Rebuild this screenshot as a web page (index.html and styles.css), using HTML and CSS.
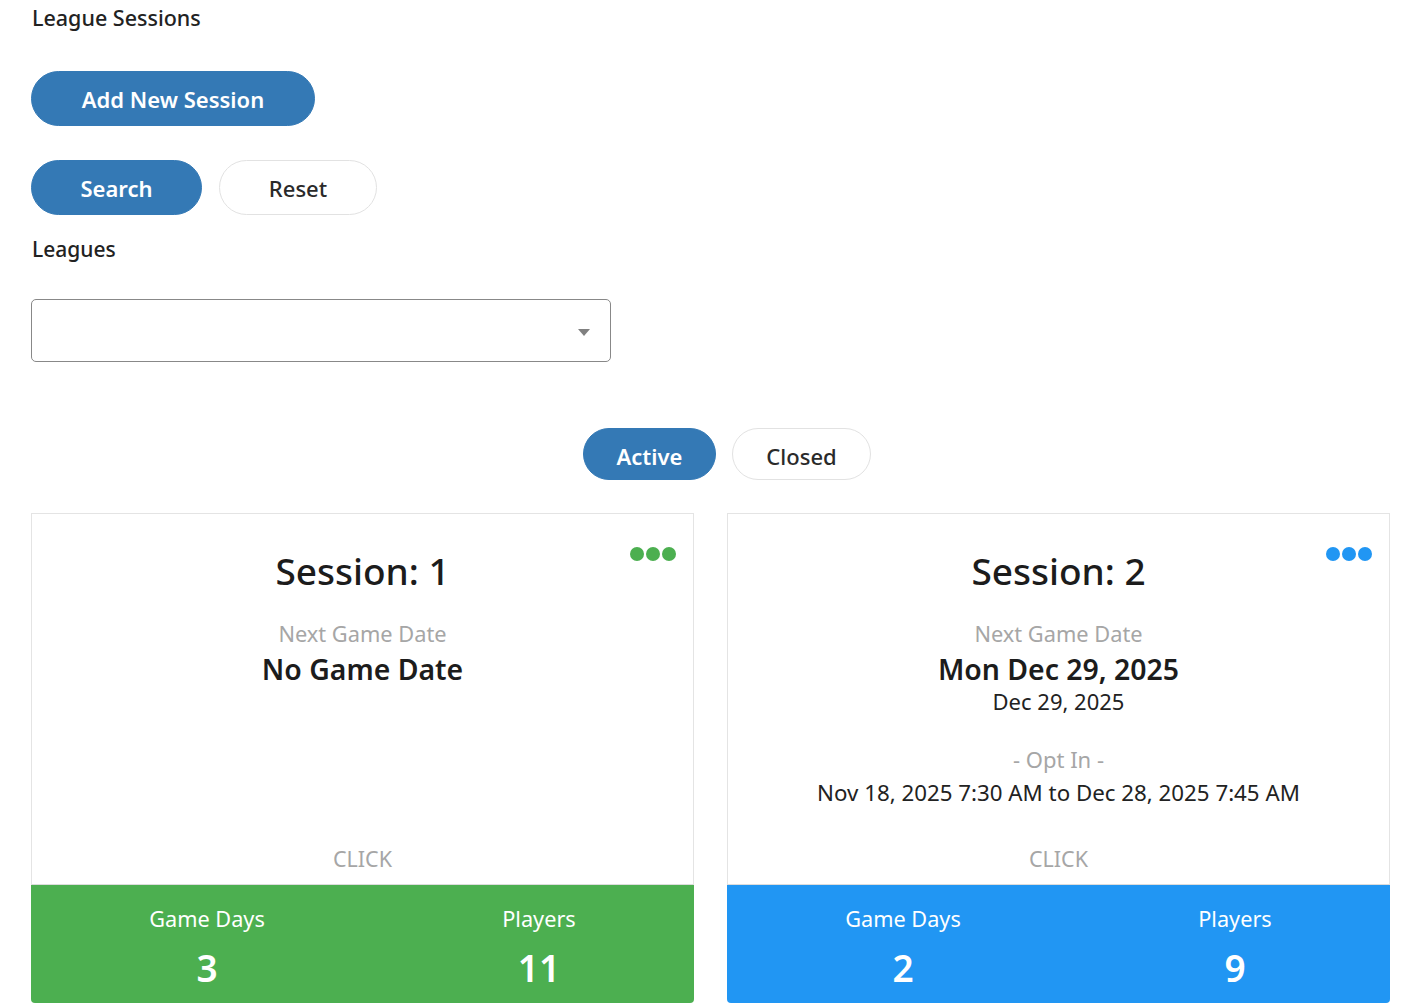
FILE: index.html
```html
<!DOCTYPE html>
<html lang="en">
<head>
<meta charset="utf-8">
<title>League Sessions</title>
<link rel="stylesheet" href="styles.css">
</head>
<body>
<div class="page">
  <h1 class="title">League Sessions</h1>
  <button class="btn btn-primary btn-add">Add New Session</button>
  <div class="search-row">
    <button class="btn btn-primary btn-search">Search</button>
    <button class="btn btn-default btn-reset">Reset</button>
  </div>
  <label class="field-label">Leagues</label>
  <div class="select">
    <span class="select-arrow"></span>
  </div>
  <div class="tabs">
    <button class="btn btn-primary tab-active">Active</button>
    <button class="btn btn-default tab-closed">Closed</button>
  </div>
  <div class="cards">
    <div class="card card-green">
      <div class="card-body">
        <div class="dots"><span></span><span></span><span></span></div>
        <div class="session-title">Session: 1</div>
        <div class="muted next-label">Next Game Date</div>
        <div class="big-date">No Game Date</div>
        <div class="muted click">CLICK</div>
      </div>
      <div class="card-footer">
        <div class="stat"><div class="stat-label">Game Days</div><div class="stat-value">3</div></div>
        <div class="stat"><div class="stat-label">Players</div><div class="stat-value">11</div></div>
      </div>
    </div>
    <div class="card card-blue">
      <div class="card-body">
        <div class="dots"><span></span><span></span><span></span></div>
        <div class="session-title">Session: 2</div>
        <div class="muted next-label">Next Game Date</div>
        <div class="big-date">Mon Dec 29, 2025</div>
        <div class="small-date">Dec 29, 2025</div>
        <div class="muted opt-label">- Opt In -</div>
        <div class="opt-range">Nov 18, 2025 7:30 AM to Dec 28, 2025 7:45 AM</div>
        <div class="muted click">CLICK</div>
      </div>
      <div class="card-footer">
        <div class="stat"><div class="stat-label">Game Days</div><div class="stat-value">2</div></div>
        <div class="stat"><div class="stat-label">Players</div><div class="stat-value">9</div></div>
      </div>
    </div>
  </div>
</div>
</body>
</html>
```

FILE: styles.css
```css
* { box-sizing: border-box; }
html, body { margin: 0; padding: 0; background: #fff; }
body {
  font-family: "Noto Sans", "Open Sans", "Liberation Sans", sans-serif;
  color: #222;
  font-size: 22px;
}
.page { padding: 0 28px 0 31px; }

.title {
  margin: 0;
  font-size: 21.5px;
  font-weight: 500;
  line-height: 36px;
  padding-left: 1px;
}

.btn {
  font-family: inherit;
  font-size: 22px;
  font-weight: 600;
  border-radius: 28px;
  border: 1px solid #e2e2e2;
  cursor: pointer;
  display: block;
  padding: 0;
}
.btn-primary { background: #3479b5; color: #fff; border-color: #3479b5; }
.btn-default { background: #fff; color: #2a2a2a; font-weight: 500; }

.btn-add { margin-top: 35px; width: 284px; height: 55px; }

.search-row { display: flex; gap: 17px; margin-top: 34px; }
.btn-search { width: 171px; height: 55px; }
.btn-reset { width: 158px; height: 55px; }

.field-label {
  display: block;
  margin-top: 19px;
  font-size: 21px;
  font-weight: 500;
  line-height: 30px;
  padding-left: 1px;
}

.select {
  margin-top: 35px;
  width: 580px;
  height: 63px;
  border: 1px solid #888;
  border-radius: 5px;
  display: flex;
  align-items: center;
  justify-content: flex-end;
  padding-right: 20px;
}
.select-arrow {
  width: 0; height: 0;
  margin-top: 3px;
  border-left: 6px solid transparent;
  border-right: 6px solid transparent;
  border-top: 7px solid #808080;
}

.tabs {
  display: flex;
  gap: 16px;
  margin-top: 66px;
  padding-left: 552px;
}
.tab-active { width: 133px; height: 52px; border-radius: 26px; padding-top: 3px; }
.tab-closed { width: 139px; height: 52px; border-radius: 26px; padding-top: 3px; }

.cards {
  display: grid;
  grid-template-columns: 663px 663px;
  gap: 33px;
  margin-top: 33px;
}
.card { display: flex; flex-direction: column; }
.card-body {
  position: relative;
  border: 1px solid #e4e4e4;
  border-bottom-color: #dcdcdc;
  height: 372px;
  display: flex;
  flex-direction: column;
  align-items: center;
  text-align: center;
  padding-top: 32px;
}
.dots {
  position: absolute;
  top: 33px;
  right: 17px;
  display: flex;
  gap: 2px;
}
.dots span { width: 14px; height: 14px; border-radius: 50%; }
.card-green .dots span { background: #4caf50; }
.card-blue .dots span { background: #2196f3; }

.session-title {
  font-size: 37px;
  font-weight: 500;
  line-height: 50px;
  color: #1c1c1c;
}
.muted { color: #a6a6a6; }
.next-label { margin-top: 23px; line-height: 30px; font-size: 21.8px; }
.big-date {
  margin-top: 2px;
  font-size: 28.4px;
  font-weight: 600;
  line-height: 36px;
  color: #1c1c1c;
}
.small-date { font-size: 22px; line-height: 28px; }
.opt-label { margin-top: 29px; font-size: 22px; line-height: 30px; }
.opt-range { margin-top: 4px; font-size: 22.3px; line-height: 30px; }
.click {
  margin-top: auto;
  margin-bottom: 10px;
  font-size: 21.5px;
  line-height: 30px;
}

.card-footer {
  height: 118px;
  border-radius: 0 0 4px 4px;
  display: grid;
  grid-template-columns: 332px 332px;
  padding-left: 10px;
  padding-top: 19px;
  color: #fff;
  text-align: center;
  overflow: hidden;
}
.card-green .card-footer { background: #4caf50; }
.card-blue .card-footer { background: #2196f3; }
.stat-label { font-size: 21.7px; line-height: 30px; }
.stat-value { margin-top: 11px; font-size: 37px; font-weight: 600; line-height: 46px; }
```
